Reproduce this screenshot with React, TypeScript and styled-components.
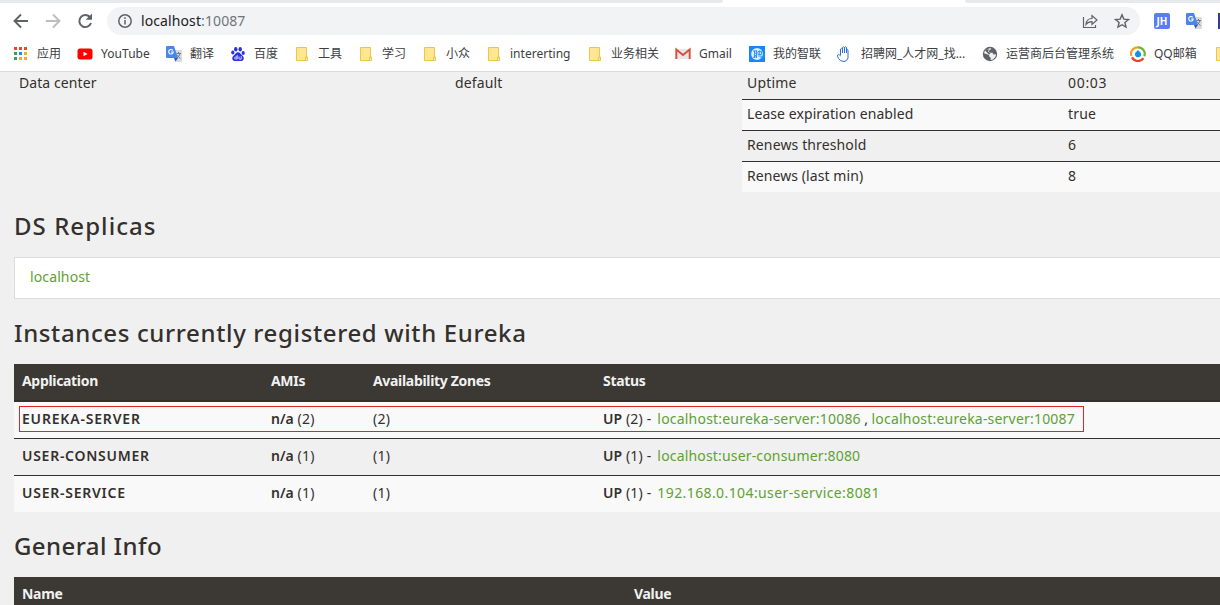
import React from "react";
import styled, { createGlobalStyle, css } from "styled-components";

const GlobalStyle = createGlobalStyle`
  * { box-sizing: border-box; }
  html, body { margin: 0; height: 605px; overflow: hidden; background: #f0f0f0; }
`;

const Page = styled.div`
  width: 1220px;
  height: 605px;
  overflow: hidden;
  display: flex;
  flex-direction: column;
  background: #f0f0f0;
  color: #34302d;
  font: 14px/20px "Noto Sans", "Noto Sans CJK SC", sans-serif;
`;

const TabStrip = styled.div`
  height: 3px;
  flex: none;
  display: flex;
  justify-content: space-between;
  background: #fff;
`;
const TabEdge = styled.div<{ $w: number; $side: "left" | "right" }>`
  width: ${(p) => p.$w}px;
  background: #e7eaed;
  border-radius: ${(p) => (p.$side === "left" ? "0 0 5px 0" : "0 0 0 5px")};
`;

const Toolbar = styled.div`
  height: 36px;
  flex: none;
  display: flex;
  align-items: center;
  background: #fff;
  padding: 0 0 0 12px;
  overflow: hidden;
`;
const NavIcon = styled.span<{ $gap?: number }>`
  display: flex;
  flex: none;
  margin-right: ${(p) => p.$gap ?? 14}px;
`;
const AddressBar = styled.div`
  width: 1033px;
  flex: none;
  height: 28px;
  border-radius: 14px;
  background: #f1f3f4;
  display: flex;
  align-items: center;
  padding: 0 10px 0 10px;
`;
const Url = styled.span`
  flex: 1;
  margin-left: 8px;
  font-size: 14px;
  letter-spacing: 0.1px;
  color: #202124;
  em { font-style: normal; color: #70757a; }
`;
const BarActions = styled.span`
  display: flex;
  gap: 16px;
`;
const Extensions = styled.div`
  display: flex;
  flex: none;
  align-items: center;
  gap: 16px;
  margin-left: 14px;
`;

const Bookmarks = styled.div`
  height: 33px;
  flex: none;
  background: #fff;
  border-bottom: 1px solid #dadcdc;
  display: flex;
  padding-left: 12px;
  overflow: hidden;
`;
const Bookmark = styled.div<{ $w: number }>`
  flex: none;
  width: ${(p) => p.$w}px;
  height: 29px;
  display: flex;
  align-items: center;
  white-space: nowrap;
`;
const BookmarkIcon = styled.span<{ $gap?: number }>`
  width: 16px;
  height: 16px;
  margin-right: ${(p) => p.$gap ?? 8}px;
  display: flex;
  flex: none;
`;
const BookmarkLabel = styled.span<{ $ls?: number }>`
  font-size: 12px;
  color: #3c4043;
  letter-spacing: ${(p) => p.$ls ?? 0}px;
`;

const Content = styled.main`
  padding-left: 14px;
  width: 1234px;
`;
const StatusPanels = styled.section`
  display: flex;
  height: 120px;
`;
const EnvPanel = styled.div`
  width: 728px;
  display: grid;
  grid-template-columns: 436px 1fr;
  padding: 1px 0 0 5px;
  align-content: start;
`;
const MetricPanel = styled.div`
  flex: 1;
`;
const MetricRow = styled.div<{ $odd?: boolean; $first?: boolean }>`
  display: grid;
  grid-template-columns: 321px 1fr;
  padding-left: 5px;
  height: ${(p) => (p.$first ? 27 : 31)}px;
  line-height: ${(p) => (p.$first ? 22 : 28)}px;
  background: ${(p) => (p.$odd ? "#f9f9f9" : "#f0f0f0")};
  ${(p) => !p.$first && css`border-top: 1px solid #34302d;`}
`;
const Text = styled.span<{ $ls?: number }>`
  letter-spacing: ${(p) => p.$ls ?? 0.2}px;
  white-space: nowrap;
`;

const Heading = styled.h1<{ $ls?: number }>`
  margin: 0;
  height: 65px;
  padding-top: 20px;
  font: 500 24px/28px "Noto Sans", sans-serif;
  letter-spacing: ${(p) => p.$ls ?? 0.5}px;
`;
const ReplicaBox = styled.div`
  height: 42px;
  background: #fff;
  border: 1px solid #ddd;
  padding: 9px 15px;
  line-height: 19px;
`;
const Link = styled.a<{ $ls?: number }>`
  color: #5fa134;
  letter-spacing: ${(p) => p.$ls ?? 0.2}px;
`;
const Links = styled.span`
  margin-left: 2px;
`;
const Comma = styled.span`
  letter-spacing: -0.1px;
  white-space: pre;
`;

const Table = styled.div`
  position: relative;
`;
const HeadRow = styled.div<{ $cols: string }>`
  display: grid;
  grid-template-columns: ${(p) => p.$cols};
  height: 38px;
  padding-left: 8px;
  line-height: 34px;
  letter-spacing: -0.32px;
  background: #3c3833;
  border-bottom: 2px solid #34302d;
  color: #f1f1f1;
  font-weight: 700;
`;
const Row = styled.div<{ $odd?: boolean; $first?: boolean }>`
  display: grid;
  grid-template-columns: 249px 102px 230px 1fr;
  height: ${(p) => (p.$first ? 36 : 37)}px;
  padding-left: 8px;
  line-height: 34px;
  white-space: nowrap;
  background: ${(p) => (p.$odd ? "#f9f9f9" : "#f0f0f0")};
  ${(p) => !p.$first && css`border-top: 1px solid #34302d; line-height: 33px;`}
`;
const Strong = styled.b<{ $ls?: number }>`
  font-weight: 600;
  letter-spacing: ${(p) => p.$ls ?? 0}px;
`;
const Highlight = styled.div`
  position: absolute;
  left: 5px;
  top: 42px;
  width: 1065px;
  height: 26px;
  border: 1px solid #e2242b;
`;

const Folder = () => (
  <svg width="16" height="16" viewBox="0 0 16 16">
    <path d="M2.500 1.500h10v9.500h1v3.500h-11z" fill="#ffe695" stroke="#e9c84c" />
    <path d="M11.500 14.500v-3.500h1.500" fill="none" stroke="#e9c84c" />
  </svg>
);
const Apps = () => {
  const colors = ["#ea4335", "#ea4335", "#ea4335", "#34a05a", "#2586e8", "#eeb211", "#34a05a", "#eeb211", "#eeb211"];
  return (
    <svg width="16" height="16" viewBox="0 0 16 16">
      {colors.map((c, i) => (
        <rect key={i} x={2 + (i % 3) * 5} y={1 + Math.floor(i / 3) * 5} width="3" height="3" fill={c} />
      ))}
    </svg>
  );
};
const YouTube = () => (
  <svg width="16" height="16" viewBox="0 0 16 16">
    <rect x="0.500" y="2.500" width="15" height="11" rx="2.500" fill="#f00" />
    <path d="M6.500 5.700 10.500 8l-4 2.300z" fill="#fff" />
  </svg>
);
const Translate = () => (
  <svg width="16" height="16" viewBox="0 0 16 16">
    <path d="M6 4h9q1 0 1 1v10q0 1-1 1H9z" fill="#d9dbdc" />
    <path d="M1 0h7l4 12H1q-1 0-1-1V1q0-1 1-1z" fill="#4a86ea" />
    <path d="M8 12h4l-2.500 3.500z" fill="#2c5fc0" />
    <path d="M6.800 4.300A2.300 2.300 0 1 0 7.300 6H5" fill="none" stroke="#fff" strokeWidth="1.100" />
    <path d="M10.500 7.500H15M12.500 6v1.500M14 7.500q-.7 3-3 4.500M11.500 9q1 2.500 3 3.500" fill="none" stroke="#68757e" strokeWidth="0.900" />
  </svg>
);
const Baidu = () => (
  <svg width="16" height="16" viewBox="0 0 16 16" fill="#2932e1">
    <ellipse cx="5.800" cy="3.200" rx="1.700" ry="2.300" />
    <ellipse cx="10.200" cy="3.200" rx="1.700" ry="2.300" />
    <ellipse cx="2.800" cy="6.600" rx="1.600" ry="2" />
    <ellipse cx="13.200" cy="6.900" rx="1.600" ry="2" />
    <path d="M8 6.300c2 0 2.600 1.600 4 3 1.700 1.600 2 2.500 1.600 4-.6 2-2.600 1.700-5.600 1.700s-5 .3-5.600-1.700c-.4-1.500 0-2.400 1.600-4 1.400-1.400 2-3 4-3z" />
    <path d="M7.200 9v4H5.600q-1 0-1-1t1-1h1.600M9 10.500v2q0 .7.700.7h1.500v-3" fill="none" stroke="#fff" strokeWidth="0.800" />
  </svg>
);
const Gmail = () => (
  <svg width="16" height="16" viewBox="0 0 16 16">
    <path d="M1 3h14v10H1z" fill="#e9e7e6" />
    <path d="M1.300 13V3.600L8 9l6.700-5.400V13" fill="none" stroke="#d84b3e" strokeWidth="1.900" />
  </svg>
);
const Zhilian = () => (
  <svg width="16" height="16" viewBox="0 0 16 16">
    <path d="M0 0h16v16H0z" fill="#1787fb" />
    <circle cx="8" cy="8" r="5.900" fill="#ddeeff" />
    <path d="M5.500 4.500v7.500M7.500 4.500V12M4 5h4M5.500 7.300h2M5.500 9.500h2M4 11.300l4-.8M9 5.500h3.500v3H9zM10.700 4.300v4M9 10h3.500q0 2-1.500 2.300" fill="none" stroke="#1787fb" strokeWidth="0.800" />
  </svg>
);
const Hand = () => (
  <svg width="16" height="16" viewBox="0 0 16 16" fill="none" stroke="#2c6fd8" strokeWidth="1">
    <path d="M4.500 9V3q1-1.500 2 0v4V1.500q1-1.500 2 0V7 1.500q1-1.500 2 0V7 4q1-1.200 1.500 0v8q-1 3.500-4 3.500-4 0-5.500-3L1.500 10q0-3 3.300 0" />
  </svg>
);
const Globe = () => (
  <svg width="16" height="16" viewBox="0 0 16 16">
    <circle cx="8" cy="8" r="7.200" fill="#5f6368" />
    <path d="M9.200 2q-.2 1.800-1.700 2L6.800 5.500l1 1.200h2.700l1 1.800 2.700-.2q-.3 3.500-3.200 5.200l-2.500.6.300-2.300-1.600-1.300V9L2 7.300Q2.300 5 3.800 3.500" fill="#fff" opacity=".9" />
    <path d="M3 4.500 7 8.500 8.500 7.500 6 5.500 7 3.500 4.500 3z" fill="#5f6368" />
  </svg>
);
const QQMail = () => (
  <svg width="16" height="16" viewBox="0 0 16 16" fill="none" strokeWidth="2.200">
    <path d="M1.300 10A6.700 6.700 0 0 1 8 1.300" stroke="#f9a01b" />
    <path d="M8 1.300a6.700 6.700 0 0 1 6.300 9" stroke="#69b82d" />
    <path d="M2 11.300a6.700 6.700 0 0 0 11.500.8" stroke="#ee4023" />
    <path d="M8 4q1 1 2.500 2.500Q12 9 10 10.700q-2 1-4 0Q4 9 5.500 6.500z" fill="#1f8edc" />
  </svg>
);

type BookmarkItem = { label: string; w: number; icon: React.ReactNode; ls?: number; gap?: number };
const bookmarks: BookmarkItem[] = [
  { label: "应用", w: 65, icon: <Apps />, gap: 9 },
  { label: "YouTube", w: 89, icon: <YouTube />, ls: 0.05 },
  { label: "翻译", w: 64, icon: <Translate /> },
  { label: "百度", w: 64, icon: <Baidu /> },
  { label: "工具", w: 64, icon: <Folder /> },
  { label: "学习", w: 64, icon: <Folder /> },
  { label: "小众", w: 64, icon: <Folder /> },
  { label: "intererting", w: 101, icon: <Folder />, ls: 0.02 },
  { label: "业务相关", w: 88, icon: <Folder /> },
  { label: "Gmail", w: 74, icon: <Gmail />, ls: 0 },
  { label: "我的智联", w: 87, icon: <Zhilian /> },
  { label: "招聘网_人才网_找...", w: 146, icon: <Hand />, gap: 9 },
  { label: "运营商后台管理系统", w: 148, icon: <Globe /> },
  { label: "QQ邮箱", w: 84, icon: <QQMail /> },
  { label: "", w: 20, icon: <Folder /> },
];

const metrics = [
  { name: "Uptime", value: "00:03", ls: 0.2, valueLs: 0.7 },
  { name: "Lease expiration enabled", value: "true", ls: 0.08, valueLs: 0.15 },
  { name: "Renews threshold", value: "6", ls: 0.13, valueLs: 0.2 },
  { name: "Renews (last min)", value: "8", ls: 0.08, valueLs: 0.2 },
];

const instances = [
  { app: "EUREKA-SERVER", n: 2, ls: 0.81, linkLs: 0.2, links: ["localhost:eureka-server:10086", "localhost:eureka-server:10087"] },
  { app: "USER-CONSUMER", n: 1, ls: 0.73, linkLs: 0.17, links: ["localhost:user-consumer:8080"] },
  { app: "USER-SERVICE", n: 1, ls: 0.75, linkLs: 0.4, links: ["192.168.0.104:user-service:8081"] },
];

export default function App() {
  return (
    <Page>
      <GlobalStyle />
      <TabStrip>
        <TabEdge $w={723} $side="left" />
        <TabEdge $w={255} $side="right" />
      </TabStrip>
      <Toolbar>
        <NavIcon>
          <svg width="18" height="18" viewBox="0 0 18 18" fill="none" stroke="#5f6368" strokeWidth="1.900"><path d="M16 9H3M9 2.500 2.500 9 9 15.500" /></svg>
        </NavIcon>
        <NavIcon>
          <svg width="18" height="18" viewBox="0 0 18 18" fill="none" stroke="#bbbdc0" strokeWidth="1.900"><path d="M2 9h13M9 2.500 15.500 9 9 15.500" /></svg>
        </NavIcon>
        <NavIcon $gap={13}>
          <svg width="18" height="18" viewBox="0 0 18 18"><path d="M15 11A6 6 0 1 1 13.800 5" fill="none" stroke="#5f6368" strokeWidth="2" /><path d="M16 1.500v6.300H9.700z" fill="#5f6368" /></svg>
        </NavIcon>
        <AddressBar>
          <svg width="16" height="16" viewBox="0 0 16 16" fill="none" stroke="#5f6368" strokeWidth="1.500"><circle cx="8" cy="8" r="6.200" /><path d="M8 7v4.500M8 4.300v1.600" /></svg>
          <Url>localhost<em>:10087</em></Url>
          <BarActions>
            <svg width="16" height="16" viewBox="0 0 16 16" fill="none" stroke="#5f6368" strokeWidth="1.200"><path d="M1.500 4v10.500h12V12" /><path d="M4 11.500q.5-6 6-6V2.500L15 7l-5 4.500V8.700q-4 0-6 2.800z" /></svg>
            <svg width="16" height="16" viewBox="0 0 16 16" fill="none" stroke="#5f6368" strokeWidth="1.400"><path d="m8 1.800 1.800 4.300 4.700.4-3.600 3 1.100 4.600L8 11.700l-4 2.400 1.100-4.600-3.600-3 4.700-.4z" /></svg>
          </BarActions>
        </AddressBar>
        <Extensions>
          <svg width="16" height="16" viewBox="0 0 16 16"><rect width="16" height="16" rx="2" fill="#5b7cf5" /><text x="8" y="12" textAnchor="middle" fontFamily="Noto Sans" fontWeight="700" fontSize="10" fill="#fff">JH</text></svg>
          <Translate />
          <svg width="16" height="16" viewBox="0 0 16 16"><rect x="1" y="1" width="15" height="14" fill="#fff" stroke="#353d93" strokeWidth="2" /></svg>
        </Extensions>
      </Toolbar>
      <Bookmarks>
        {bookmarks.map((b, i) => (
          <Bookmark key={i} $w={b.w}>
            <BookmarkIcon $gap={b.gap}>{b.icon}</BookmarkIcon>
            <BookmarkLabel $ls={b.ls}>{b.label}</BookmarkLabel>
          </Bookmark>
        ))}
      </Bookmarks>
      <Content>
        <StatusPanels>
          <EnvPanel>
            <Text $ls={0.08}>Data center</Text>
            <Text $ls={0.12}>default</Text>
          </EnvPanel>
          <MetricPanel>
            {metrics.map((m, i) => (
              <MetricRow key={m.name} $first={i === 0} $odd={i % 2 === 1}>
                <Text $ls={m.ls}>{m.name}</Text>
                <Text $ls={m.valueLs}>{m.value}</Text>
              </MetricRow>
            ))}
          </MetricPanel>
        </StatusPanels>
        <Heading $ls={1.05}>DS Replicas</Heading>
        <ReplicaBox><Link $ls={0.12}>localhost</Link></ReplicaBox>
        <Heading $ls={0.63}>Instances currently registered with Eureka</Heading>
        <Table>
          <HeadRow $cols="249px 102px 230px 1fr">
            <span>Application</span><span>AMIs</span><span>Availability Zones</span><span>Status</span>
          </HeadRow>
          {instances.map((r, i) => (
            <Row key={r.app} $first={i === 0} $odd={i % 2 === 0}>
              <Strong $ls={r.ls}>{r.app}</Strong>
              <Text><Strong>n/a</Strong> ({r.n})</Text>
              <Text>({r.n})</Text>
              <Text>
                <Strong>UP</Strong> ({r.n}) -{" "}
                <Links>
                  {r.links.map((l, j) => (
                    <React.Fragment key={l}>{j > 0 && <Comma>{" , "}</Comma>}<Link $ls={r.linkLs}>{l}</Link></React.Fragment>
                  ))}
                </Links>
              </Text>
            </Row>
          ))}
          <Highlight />
        </Table>
        <Heading $ls={0.42}>General Info</Heading>
        <HeadRow $cols="612px 1fr"><span>Name</span><span>Value</span></HeadRow>
      </Content>
    </Page>
  );
}
